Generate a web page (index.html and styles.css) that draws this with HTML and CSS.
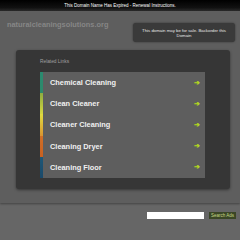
FILE: index.html
```html
<!DOCTYPE html>
<html>
<head>
<meta charset="utf-8">
<link rel="stylesheet" href="styles.css">
</head>
<body>
<div class="topbar">This Domain Name Has Expired - Renewal Instructions.</div>
<div class="main">
  <div class="header">
    <div class="domain">naturalcleaningsolutions.org</div>
    <div class="sale">This domain may be for sale. Backorder this Domain</div>
  </div>
  <div class="panel">
    <div class="related">Related Links</div>
    <div class="links">
      <div class="row c1"><span>Chemical Cleaning</span><span class="arrow">➔</span></div>
      <div class="row c2"><span>Clean Cleaner</span><span class="arrow">➔</span></div>
      <div class="row c3"><span>Cleaner Cleaning</span><span class="arrow">➔</span></div>
      <div class="row c4"><span>Cleaning Dryer</span><span class="arrow">➔</span></div>
      <div class="row c5"><span>Cleaning Floor</span><span class="arrow">➔</span></div>
    </div>
  </div>
</div>
<div class="search">
  <div class="input"></div>
  <div class="btn">Search Ads</div>
</div>
</body>
</html>
```
FILE: styles.css
```css
html, body { margin: 0; padding: 0; }
body {
  width: 240px; height: 240px; overflow: hidden;
  background: #666666;
  font-family: "Liberation Sans", Arial, sans-serif;
}
.topbar {
  height: 11px;
  background: linear-gradient(#000 0%, #111 70%, #2a2a2a 100%);
  color: #fff;
  font-size: 4.5px;
  line-height: 11px;
  text-align: center;
}
.main {
  height: 192px;
  background: #5e5e5e;
  box-shadow: 0 1px 2px rgba(0,0,0,0.35);
  position: relative;
  box-sizing: border-box;
}
.header {
  display: flex;
  justify-content: space-between;
  align-items: flex-start;
  padding: 9px 5px 0 7px;
  height: 39px;
  box-sizing: border-box;
}
.domain {
  color: #868686;
  font-weight: bold;
  font-size: 7.4px;
  line-height: 10px;
}
.sale {
  width: 102px;
  height: 19px;
  margin-top: 3px;
  box-sizing: border-box;
  background: #3a3a3a;
  border-radius: 3px;
  box-shadow: 0 0 2px rgba(0,0,0,0.5);
  color: #e8e8e8;
  font-size: 4.3px;
  line-height: 5px;
  text-align: center;
  padding: 5px 8px 0;
}
.panel {
  margin-left: 16px;
  width: 214px;
  height: 139px;
  box-sizing: border-box;
  background: #363636;
  border-radius: 3px;
  box-shadow: 0 1px 3px rgba(0,0,0,0.45);
  padding: 9px 25px 0 24px;
}
.related {
  color: #a0a0a0;
  font-size: 4.8px;
  line-height: 6px;
  height: 13px;
}
.links { display: flex; flex-direction: column; }
.row {
  height: 21.2px;
  background: #5e5e5e;
  border-left: 3px solid #2e8a6e;
  display: flex;
  justify-content: space-between;
  align-items: center;
  padding: 0 5px 0 7px;
  color: #f0f0f0;
  font-weight: bold;
  font-size: 7.4px;
}
.c1 { border-image: linear-gradient(#2a8a70, #2e8a6a) 1; }
.c2 { border-image: linear-gradient(#8aaa40, #d8d840) 1; }
.c3 { border-image: linear-gradient(#e0e040, #d89030) 1; }
.c4 { border-image: linear-gradient(#d07028, #c86020) 1; }
.c5 { border-image: linear-gradient(#1e5878, #1a4868) 1; }
.arrow {
  color: #b4d820;
  font-size: 7px;
}
.search {
  display: flex;
  justify-content: flex-end;
  align-items: center;
  gap: 5px;
  padding: 9px 4px 0 0;
}
.input {
  width: 57px;
  height: 7px;
  background: #fff;
}
.btn {
  width: 27px;
  height: 7px;
  background: #3a4626;
  color: #c8d888;
  font-size: 4.5px;
  line-height: 7px;
  text-align: center;
}
```
